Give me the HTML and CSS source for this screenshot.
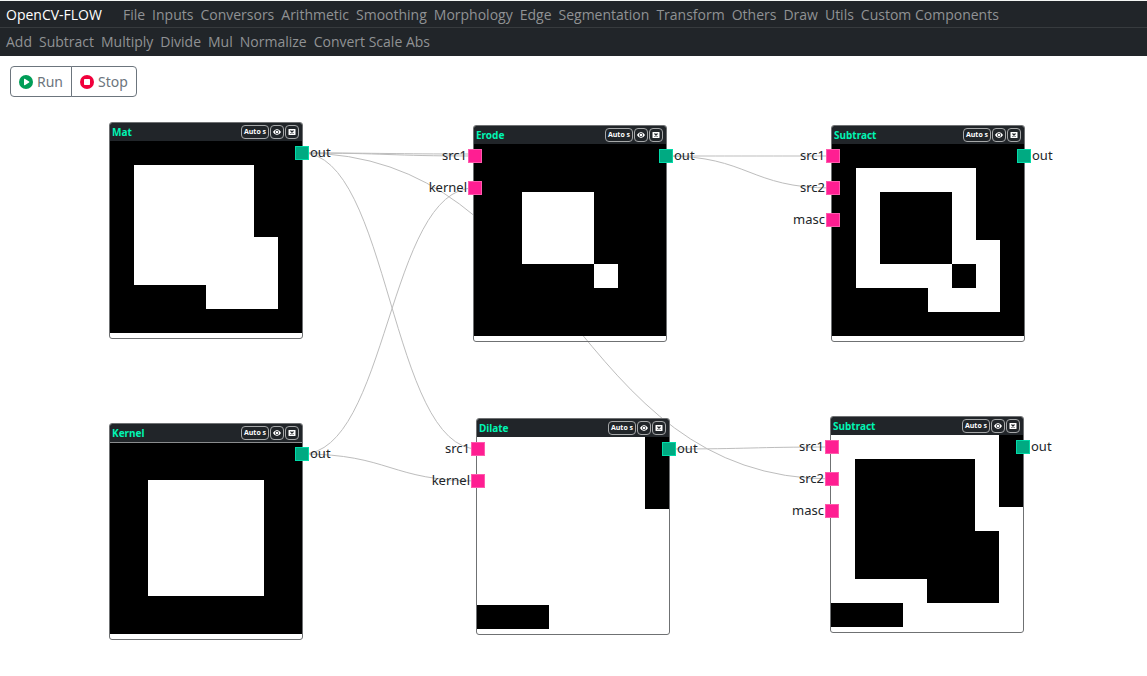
FILE: index.html
```html
<!DOCTYPE html>
<html lang="en">
<head>
<meta charset="utf-8">
<title>OpenCV-FLOW</title>
<link rel="stylesheet" href="styles.css">
<script src="nodes.js" defer></script>
</head>
<body>
<header class="topbar">
  <nav class="menu" aria-label="Main">
    <a class="brand" href="#">OpenCV-FLOW</a>
    <a href="#">File</a><a href="#">Inputs</a><a href="#">Conversors</a><a href="#">Arithmetic</a><a href="#">Smoothing</a><a href="#">Morphology</a><a href="#">Edge</a><a href="#">Segmentation</a><a href="#">Transform</a><a href="#">Others</a><a href="#">Draw</a><a href="#">Utils</a><a href="#">Custom Components</a>
  </nav>
  <nav class="menu submenu" aria-label="Arithmetic">
    <a href="#">Add</a><a href="#">Subtract</a><a href="#">Multiply</a><a href="#">Divide</a><a href="#">Mul</a><a href="#">Normalize</a><a href="#">Convert Scale Abs</a>
  </nav>
</header>
<div class="toolbar">
  <div class="group">
    <button class="action" type="button">
      <svg class="action-icon" viewBox="0 0 14 14"><circle cx="7" cy="7" r="7" fill="#009d57"/><path d="M5 4.200v5.600c0 .4.4.6.8.4l4.300-2.700c.4-.2.4-.7 0-.9L5.800 3.800C5.400 3.600 5 3.800 5 4.200z" fill="#fff"/></svg>Run
    </button>
    <button class="action" type="button">
      <svg class="action-icon" viewBox="0 0 14 14"><circle cx="7" cy="7" r="7" fill="#f1003c"/><rect x="4" y="4" width="6" height="6" rx=".7" fill="#fff"/></svg>Stop
    </button>
  </div>
</div>
<main class="canvas">
  <svg class="wires" aria-hidden="true">
    <path d="M302 46C388 46 388 49 474 49"/>
    <path d="M302 46C388 46 388 47 474 47"/>
    <path d="M302 46C390 46 390 342 478 342"/>
    <path d="M302 46C567 46 567 372 832 372"/>
    <path d="M302 347C388 347 388 81 474 81"/>
    <path d="M302 347C390 347 390 374 478 374"/>
    <path d="M666 49C749 49 749 49 832 49"/>
    <path d="M666 49C749 49 749 81 832 81"/>
    <path d="M669 342C751 342 751 340 832 340"/>
  </svg>
</main>
</body>
</html>
```
FILE: styles.css
```css
* { box-sizing: border-box; }
body {
  margin: 0;
  min-height: 100vh;
  display: flex;
  flex-direction: column;
  background: #fff;
  color: #212529;
  font-family: "Noto Sans", sans-serif;
  font-size: 14px;
}
.topbar { background: #212529; border-top: 1px solid #f4f6f4; font-family: "Open Sans", "Noto Sans", sans-serif; }
.menu {
  display: flex;
  gap: 7px;
  height: 27px;
  padding: 2px 6px 0;
  align-items: center;
  border-bottom: 1px solid #373b3e;
}
.menu a { color: #909294; text-decoration: none; white-space: nowrap; line-height: 20px; }
.menu .brand { color: #fff; margin-right: 14px; }
.submenu { height: 28px; padding-top: 0; border-bottom: 0; }
.toolbar { padding: 10px; }
.group { display: inline-flex; vertical-align: top; }
.action {
  display: flex;
  align-items: center;
  gap: 4px;
  height: 31px;
  padding: 0 8px;
  border: 1px solid #6c757d;
  background: #fff;
  color: #6c757d;
  font: inherit;
}
.action:first-child { border-radius: 4px 0 0 4px; }
.action:last-child { border-radius: 0 4px 4px 0; margin-left: -1px; }
.action-icon { width: 14px; height: 14px; }

.canvas { position: relative; flex: 1; min-height: 540px; }
.wires { position: absolute; inset: 0; width: 100%; height: 100%; overflow: visible; }
.wires path { fill: none; stroke: #bdbdbd; stroke-width: 1px; }
.node {
  position: absolute;
  width: 194px;
  border: 1px solid #6f7173;
  border-radius: 3px;
  padding-bottom: 5px;
}
.node-head {
  display: flex;
  align-items: center;
  gap: 1px;
  height: 18px;
  padding: 0 3px 1px 2px;
  background: #212529;
  border-radius: 2px 2px 0 0;
}
.node-title { flex: 1; margin: 0; color: #00f5b4; font: 700 10px/12px "Noto Sans", sans-serif; }
.tool {
  display: flex;
  align-items: center;
  justify-content: center;
  width: 14px;
  height: 14px;
  padding: 0;
  border: 1px solid #a6a8a9;
  border-radius: 4px;
  background: #212529;
  color: #fff;
  font: 700 7px/8px "Open Sans", "Noto Sans", sans-serif;
}
.tool-text { width: 28px; }
.tool svg { width: 8px; height: 8px; }
.preview { display: block; width: 192px; height: 192px; background: #fff; }
.ruled .node-head { box-shadow: 0 1px #8a8c8e; position: relative; }
.ports { position: absolute; top: 23px; display: flex; flex-direction: column; gap: 18px; }
.inputs { right: 184px; align-items: flex-end; }
.outputs { left: 185px; }
.port { display: flex; align-items: center; gap: 1px; height: 14px; font-size: 13px; line-height: 14px; }
.label { padding-bottom: 2px; }
.pin { width: 14px; height: 14px; background: #ff1e92; border: 1px solid #ff5aad; }
.outputs .pin { background: #00aa82; border-color: #00dba8; }
```
FILE: nodes.js
```js
const EYE = '<svg viewBox="0 0 16 16"><path fill="#fff" fill-rule="evenodd" d="M0 8s3-5.500 8-5.500S16 8 16 8s-3 5.500-8 5.500S0 8 0 8zm8 4a4 4 0 1 0 0-8 4 4 0 0 0 0 8z"/><circle cx="8" cy="8" r="2.600" fill="#fff"/></svg>';
const CLOSE = '<svg viewBox="0 0 16 16"><rect x="1" y="2" width="14" height="12" rx="1" fill="#fff"/><path d="M5 5l6 6M11 5l-6 6" stroke="#212529" stroke-width="2.400"/></svg>';

// Each preview is a cell grid: [column, row, width, height, colour].
const W = '#fff';
const K = '#000';
const nodes = [
  { name: 'Mat', x: 109, y: 15, grid: 8, inputs: [],
    cells: [[0, 0, 8, 8, K], [1, 1, 5, 5, W], [4, 4, 3, 3, W]] },
  { name: 'Erode', x: 473, y: 18, grid: 8, inputs: ['src1', 'kernel'],
    cells: [[0, 0, 8, 8, K], [2, 2, 3, 3, W], [5, 5, 1, 1, W]] },
  { name: 'Subtract', x: 831, y: 18, grid: 8, inputs: ['src1', 'src2', 'masc'],
    cells: [[0, 0, 8, 8, K], [1, 1, 5, 5, W], [4, 4, 3, 3, W], [2, 2, 3, 3, K], [5, 5, 1, 1, K]] },
  { name: 'Kernel', x: 109, y: 316, grid: 5, inputs: [], ruled: true,
    cells: [[0, 0, 5, 5, K], [1, 1, 3, 3, W]] },
  { name: 'Dilate', x: 476, y: 311, grid: 8, inputs: ['src1', 'kernel'],
    cells: [[7, 0, 1, 3, K], [0, 7, 3, 1, K]] },
  { name: 'Subtract', x: 830, y: 309, grid: 8, inputs: ['src1', 'src2', 'masc'],
    cells: [[7, 0, 1, 3, K], [0, 7, 3, 1, K], [1, 1, 5, 5, K], [4, 4, 3, 3, K]] }
];

const canvas = document.querySelector('.canvas');
for (const n of nodes) {
  const rects = n.cells.map(([x, y, w, h, c]) =>
    `<rect x="${x}" y="${y}" width="${w}" height="${h}" fill="${c}"/>`).join('');
  const inputs = n.inputs.map(t =>
    `<div class="port"><span class="label">${t}</span><span class="pin"></span></div>`).join('');
  canvas.insertAdjacentHTML('beforeend', `
    <article class="node${n.ruled ? ' ruled' : ''}" style="left:${n.x}px;top:${n.y}px">
      <div class="node-head">
        <h2 class="node-title">${n.name}</h2>
        <button class="tool tool-text" type="button">Auto s</button>
        <button class="tool" type="button" aria-label="View">${EYE}</button>
        <button class="tool" type="button" aria-label="Close">${CLOSE}</button>
      </div>
      <svg class="preview" viewBox="0 0 ${n.grid} ${n.grid}" shape-rendering="crispEdges">${rects}</svg>
      <div class="ports inputs">${inputs}</div>
      <div class="ports outputs"><div class="port"><span class="pin"></span><span class="label">out</span></div></div>
    </article>`);
}
```
